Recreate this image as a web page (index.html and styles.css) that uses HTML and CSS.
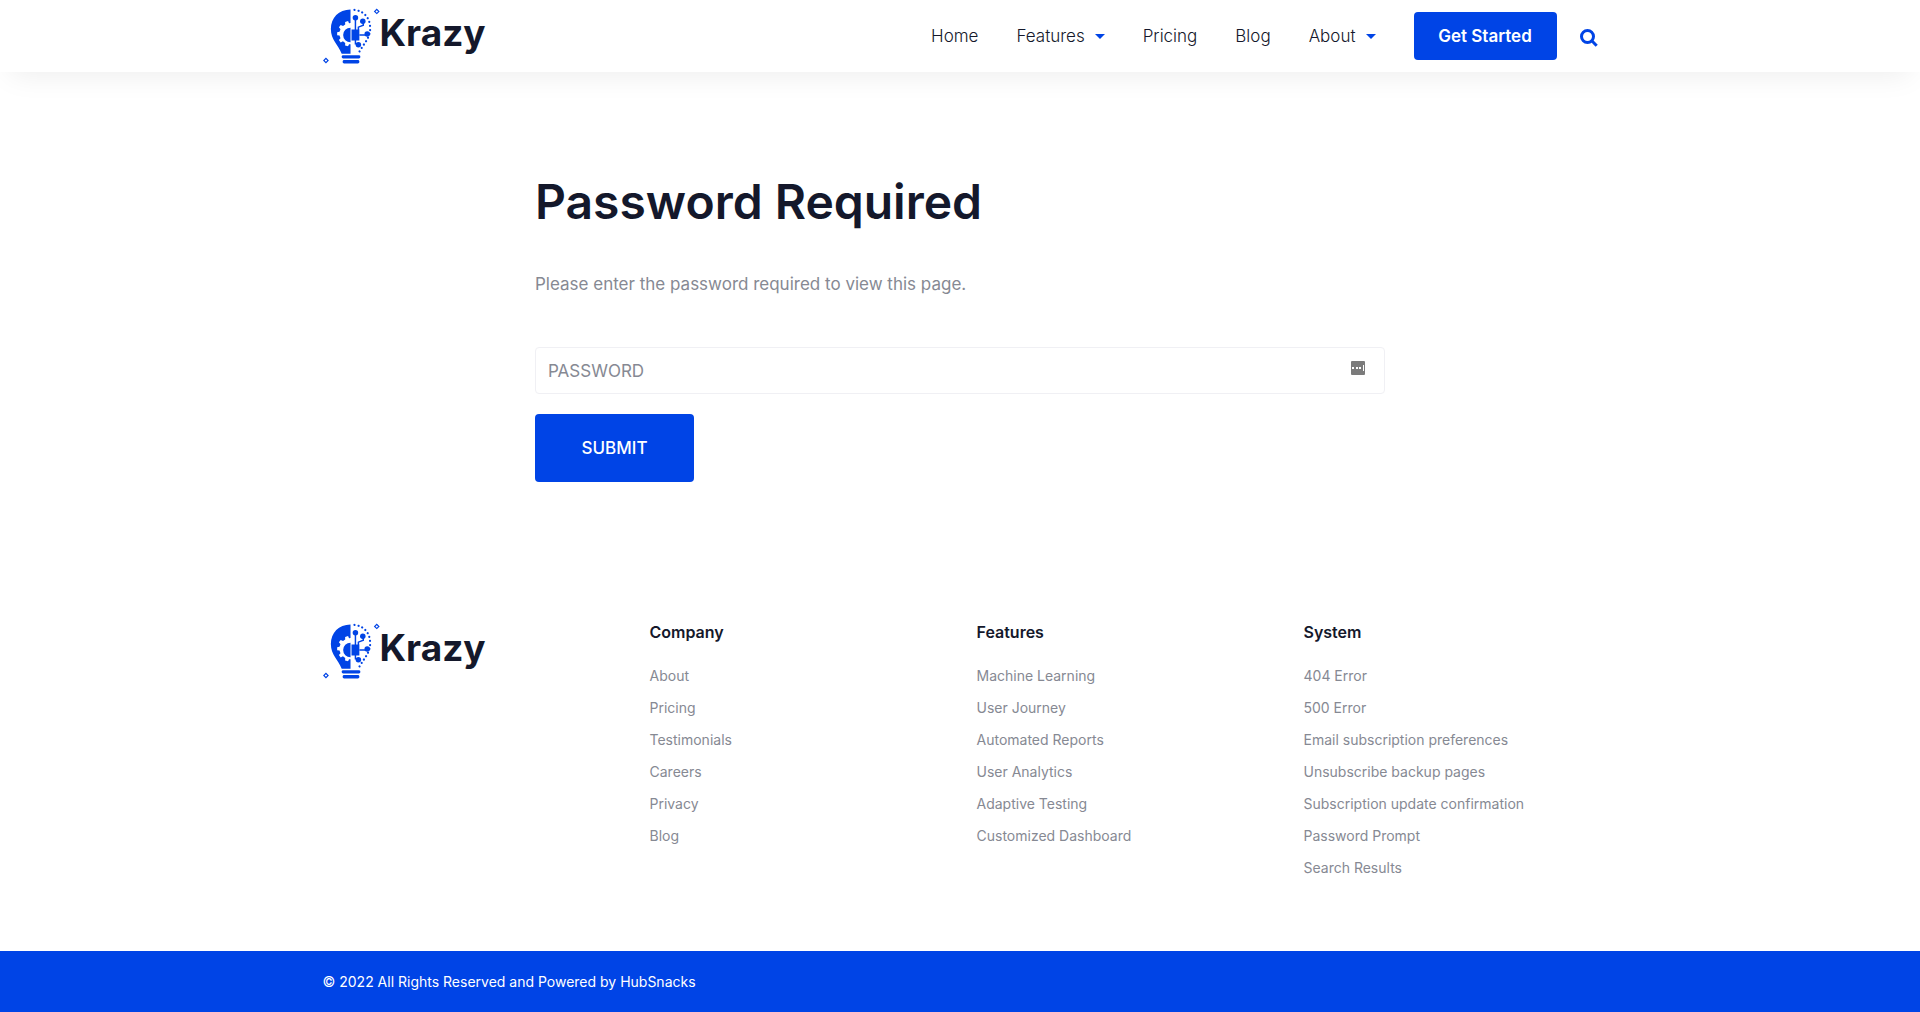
FILE: index.html
```html
<!DOCTYPE html>
<html lang="en">
<head>
<meta charset="utf-8">
<meta name="viewport" content="width=device-width, initial-scale=1">
<title>Password Required</title>
<link rel="stylesheet" href="styles.css">
</head>
<body>
<svg class="sprite" aria-hidden="true">
  <symbol id="bulb" viewBox="0 0 58 62">
    <path fill="#0044e6" d="M28 5C16 5 8 13.500 8 25c0 11 7.500 16 11 25h9V40.500l-1.500-.2-1 2.200-3-.8.1-2.600-2.300-1.700-2.300 1.200-1.800-2.500 1.600-1.900-1-2.600-2.400-.4v-3l2.400-.5 1-2.600-1.600-1.900 1.800-2.400 2.400 1 2.200-1.600-.1-2.500 3-.9 1 2.200 1.500-.2z"/>
    <path fill="#0044e6" d="M28 23.500a7.500 7.500 0 0 0 0 15zM29 25.500H37v11h-8z"/>
    <g fill="none" stroke="#0044e6" stroke-width="1.500">
      <path d="M33 26V14M36 26v-3l5-2v-4M37 31h8M33 36v4h3v1"/>
      <path stroke-width="2.200" stroke-linecap="round" stroke-dasharray="0.100 4" d="M32 5.500C42 6.500 48 14 48 24c0 10-6 15-11 24"/>
    </g>
    <g fill="#0044e6">
      <circle cx="33" cy="13.500" r="2.800"/><circle cx="40.500" cy="17" r="2.800"/><circle cx="45" cy="30" r="2.800"/><circle cx="36" cy="41" r="2.800"/>
      <rect x="19" y="51.500" width="19" height="3.500" rx="1.500"/><rect x="20" y="56.500" width="17" height="3.500" rx="1.500"/>
      <path fill-rule="evenodd" d="M54.700 4l3 3-3 3-3-3zm0 1.700l-1.300 1.300 1.300 1.300 1.300-1.300zM3 54l3 3-3 3-3-3zm0 1.700l-1.300 1.300 1.300 1.300 1.300-1.300z"/>
    </g>
  </symbol>
</svg>

<header class="header">
  <div class="container header-row">
    <a class="logo" href="#"><svg class="logo-mark" aria-hidden="true"><use href="#bulb"/></svg><span>Krazy</span></a>
    <nav class="nav" aria-label="Main">
      <a href="#">Home</a>
      <a class="has-menu" href="#">Features</a>
      <a href="#">Pricing</a>
      <a href="#">Blog</a>
      <a class="has-menu" href="#">About</a>
    </nav>
    <button class="button button-small" type="button">Get Started</button>
    <button class="search" type="button" aria-label="Search">
      <svg viewBox="0 0 18 18" width="18" height="18" aria-hidden="true"><circle cx="7.500" cy="7.500" r="6" fill="none" stroke="#0044e6" stroke-width="3"/><path d="M12 12l4.700 4.700" stroke="#0044e6" stroke-width="3"/></svg>
    </button>
  </div>
</header>

<main class="main">
  <h1>Password Required</h1>
  <p>Please enter the password required to view this page.</p>
  <form>
    <div class="field">
      <input type="password" placeholder="PASSWORD" aria-label="Password">
      <svg viewBox="0 0 14 14" width="14" height="14" aria-hidden="true"><rect width="14" height="14" rx="1" fill="#7b7b7b"/><path fill="#fff" d="M1 6h2v2H1zM5 6h2v2H5zM8 6h2v2H8zM12 4h1v6h-1z"/></svg>
    </div>
    <button class="button button-large" type="submit">SUBMIT</button>
  </form>
</main>

<footer>
  <div class="container footer-grid">
    <div class="footer-brand"><a class="logo" href="#"><svg class="logo-mark" aria-hidden="true"><use href="#bulb"/></svg><span>Krazy</span></a></div>
    <section>
      <h2>Company</h2>
      <ul>
        <li><a href="#">About</a></li>
        <li><a href="#">Pricing</a></li>
        <li><a href="#">Testimonials</a></li>
        <li><a href="#">Careers</a></li>
        <li><a href="#">Privacy</a></li>
        <li><a href="#">Blog</a></li>
      </ul>
    </section>
    <section>
      <h2>Features</h2>
      <ul>
        <li><a href="#">Machine Learning</a></li>
        <li><a href="#">User Journey</a></li>
        <li><a href="#">Automated Reports</a></li>
        <li><a href="#">User Analytics</a></li>
        <li><a href="#">Adaptive Testing</a></li>
        <li><a href="#">Customized Dashboard</a></li>
      </ul>
    </section>
    <section>
      <h2>System</h2>
      <ul>
        <li><a href="#">404 Error</a></li>
        <li><a href="#">500 Error</a></li>
        <li><a href="#">Email subscription preferences</a></li>
        <li><a href="#">Unsubscribe backup pages</a></li>
        <li><a href="#">Subscription update confirmation</a></li>
        <li><a href="#">Password Prompt</a></li>
        <li><a href="#">Search Results</a></li>
      </ul>
    </section>
  </div>
  <div class="copyright"><div class="container">© 2022 All Rights Reserved and Powered by HubSnacks</div></div>
</footer>
</body>
</html>
```
FILE: styles.css
```css
* { box-sizing: border-box; }
body { margin: 0; background: #fff; color: #868993; font: 400 17px/24px Inter, sans-serif; }
a { color: inherit; text-decoration: none; }
h1, h2, p, ul { margin: 0; padding: 0; }
ul { list-style: none; }
button, input { font: inherit; }
.sprite { display: none; }
.container { width: 100%; max-width: 1315px; margin: 0 auto; padding: 0 20px; }

.header { background: #fff; box-shadow: 0 12px 30px -10px rgba(0, 0, 0, .08); }
.header-row { display: flex; align-items: center; height: 72px; padding-bottom: 2px; }
.logo { display: inline-flex; align-items: flex-start; color: #14182b; font-size: 37px; line-height: 58px; font-weight: 700; }
.logo-mark { width: 57px; height: 62px; }
.nav { display: flex; gap: 38px; padding-top: 2px; margin-left: auto; margin-right: 38px; color: #14182b; font-weight: 300; }
.has-menu { display: flex; align-items: center; gap: 10px; }
.has-menu::after { content: ""; border: 5px solid transparent; border-top-color: #0044e6; border-bottom: 0; }

.button { border: 0; border-radius: 4px; background: #0044e6; color: #fff; }
.button-small { width: 143px; height: 48px; margin-top: 2px; font-weight: 600; }
.button-large { width: 159px; height: 68px; font-weight: 500; }
.search { display: flex; margin-left: 23px; padding: 6px 0 0; border: 0; background: none; }

.main { width: 100%; max-width: 890px; margin: 0 auto; padding: 98px 20px 132px; }
h1 { color: #14182b; font-size: 48px; line-height: 64px; font-weight: 600; }
.main p { margin: 38px 0 51px; }
.field { display: flex; align-items: center; margin-bottom: 20px; padding: 0 19px 0 12px; height: 47px; border: 1px solid #f0f0f4; border-radius: 4px; }
.field input { flex: 1; min-width: 0; padding: 0; border: 0; outline: 0; background: none; color: #14182b; }
.field input::placeholder { color: #868993; opacity: 1; }
.field svg { margin-bottom: 6px; }

.footer-grid { display: grid; grid-template-columns: repeat(4, 1fr); column-gap: 33px; padding-bottom: 72px; }
.footer-brand { padding-top: 5px; }
h2 { margin: 6px 0 21px; color: #14182b; font-size: 16px; line-height: 24px; font-weight: 600; }
.footer-grid ul { display: grid; gap: 10px; font-size: 14px; line-height: 22px; }
.copyright { padding: 20px 0 19px; background: #0044e6; color: #fff; font-size: 14px; line-height: 22px; }

@media (max-width: 1000px) {
  .header-row { flex-wrap: wrap; height: auto; }
  .nav { flex-wrap: wrap; gap: 16px; margin-left: 0; }
  .footer-grid { grid-template-columns: repeat(2, 1fr); row-gap: 32px; }
}
```
